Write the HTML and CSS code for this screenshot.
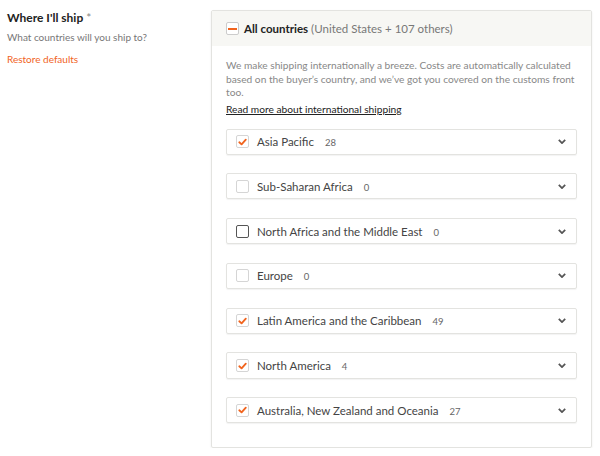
FILE: index.html
```html
<!DOCTYPE html>
<html>
<head>
<meta charset="utf-8">
<link rel="stylesheet" href="styles.css">
</head>
<body>
<div class="page">
  <div class="side">
    <div class="title">Where I'll ship <span class="req">*</span></div>
    <div class="sub">What countries will you ship to?</div>
    <a class="restore">Restore defaults</a>
  </div>
  <div class="panel">
    <div class="head">
      <span class="cb partial"><span class="dash"></span></span>
      <span class="all">All countries</span><span class="others">(United States + 107 others)</span>
    </div>
    <div class="body">
      <p class="desc">We make shipping internationally a breeze. Costs are automatically calculated<br>based on the buyer’s country, and we’ve got you covered on the customs front<br>too.</p>
      <a class="more">Read more about international shipping</a>
      <div class="rows">
        <div class="row"><span class="cb on"><svg viewBox="0 0 12 12"><path d="M2.5 6.3 L5 8.6 L9.6 3.4"/></svg></span><span class="name">Asia Pacific</span><span class="count">28</span><svg class="chev" viewBox="0 0 10 6"><path d="M1 1 L5 5 L9 1"/></svg></div>
        <div class="row"><span class="cb"></span><span class="name">Sub-Saharan Africa</span><span class="count">0</span><svg class="chev" viewBox="0 0 10 6"><path d="M1 1 L5 5 L9 1"/></svg></div>
        <div class="row"><span class="cb dark"></span><span class="name">North Africa and the Middle East</span><span class="count">0</span><svg class="chev" viewBox="0 0 10 6"><path d="M1 1 L5 5 L9 1"/></svg></div>
        <div class="row"><span class="cb"></span><span class="name">Europe</span><span class="count">0</span><svg class="chev" viewBox="0 0 10 6"><path d="M1 1 L5 5 L9 1"/></svg></div>
        <div class="row"><span class="cb on"><svg viewBox="0 0 12 12"><path d="M2.5 6.3 L5 8.6 L9.6 3.4"/></svg></span><span class="name">Latin America and the Caribbean</span><span class="count">49</span><svg class="chev" viewBox="0 0 10 6"><path d="M1 1 L5 5 L9 1"/></svg></div>
        <div class="row"><span class="cb on"><svg viewBox="0 0 12 12"><path d="M2.5 6.3 L5 8.6 L9.6 3.4"/></svg></span><span class="name">North America</span><span class="count">4</span><svg class="chev" viewBox="0 0 10 6"><path d="M1 1 L5 5 L9 1"/></svg></div>
        <div class="row"><span class="cb on"><svg viewBox="0 0 12 12"><path d="M2.5 6.3 L5 8.6 L9.6 3.4"/></svg></span><span class="name">Australia, New Zealand and Oceania</span><span class="count">27</span><svg class="chev" viewBox="0 0 10 6"><path d="M1 1 L5 5 L9 1"/></svg></div>
      </div>
    </div>
  </div>
</div>
</body>
</html>
```
FILE: styles.css
```css
* { box-sizing: border-box; }
body {
  margin: 0;
  background: #fff;
  font-family: "Lato", "Open Sans", sans-serif;
  color: #222;
}
.page {
  display: flex;
  padding-top: 10px;
}
.side {
  width: 211px;
  padding-left: 7px;
  display: flex;
  flex-direction: column;
}
.title {
  font-size: 12px;
  font-weight: bold;
  color: #222;
  line-height: 16px;
}
.req { color: #888; font-weight: normal; }
.sub {
  margin-top: 4px;
  font-size: 10px;
  color: #777;
  line-height: 14px;
}
.restore {
  margin-top: 8px;
  font-size: 10px;
  color: #f1641e;
  line-height: 14px;
}
.panel {
  width: 381px;
  height: 438px;
  border: 1px solid #e3e3e0;
  border-radius: 2px;
  box-shadow: 0 1px 2px rgba(0,0,0,0.08);
  display: flex;
  flex-direction: column;
}
.head {
  height: 35px;
  background: #f7f7f4;
  display: flex;
  align-items: center;
  padding-left: 14px;
  font-size: 11.5px;
}
.all { font-weight: bold; color: #222; margin-left: 5px; }
.others { color: #777; margin-left: 3px; }
.cb {
  width: 13px;
  height: 13px;
  border: 1px solid #d5d5d5;
  border-radius: 2px;
  background: #fff;
  display: flex;
  align-items: center;
  justify-content: center;
  flex: none;
}
.cb.dark { border: 1.5px solid #555; }
.cb.partial { border-color: #ccc; }
.dash { width: 9px; height: 2px; background: #f1641e; }
.cb svg { width: 12px; height: 12px; }
.cb svg path { fill: none; stroke: #f1641e; stroke-width: 2; stroke-linecap: round; stroke-linejoin: round; }
.body {
  padding: 13px 14px 0 14px;
}
.desc {
  margin: 0;
  font-size: 10.2px;
  line-height: 13.5px;
  color: #888;
  white-space: nowrap;
}
.more {
  display: block;
  margin-top: 2px;
  font-size: 10.2px;
  color: #222;
  text-decoration: underline;
  line-height: 14px;
}
.rows {
  margin-top: 13px;
  display: flex;
  flex-direction: column;
  gap: 18.6px;
}
.row {
  height: 26.2px;
  border: 1px solid #e3e3e0;
  border-radius: 2px;
  box-shadow: 0 1px 1px rgba(0,0,0,0.05);
  display: flex;
  align-items: center;
  padding-left: 9px;
  padding-right: 10px;
}
.name {
  margin-left: 8px;
  font-size: 11.5px;
  color: #444;
}
.count {
  margin-left: 11px;
  font-size: 9.5px;
  color: #666;
  margin-top: 2px;
}
.chev {
  margin-left: auto;
  width: 8px;
  height: 5px;
}
.chev path { fill: none; stroke: #555; stroke-width: 2.2; }
```
